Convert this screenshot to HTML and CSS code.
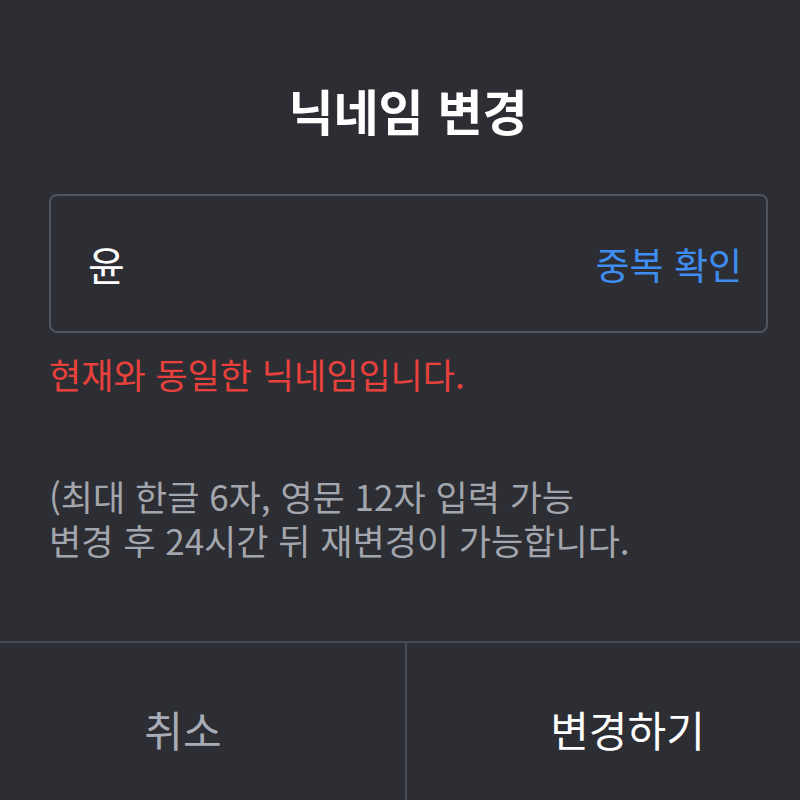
FILE: index.html
```html
<!DOCTYPE html>
<html lang="ko">
  <head>
    <meta charset="UTF-8">
    <meta name="viewport" content="width=device-width, initial-scale=1.0">
    <title>닉네임 변경</title>
    <link rel="stylesheet" href="styles.css">
  </head>
  <body>

    <section class="modal">
      <h1 class="modalTitle">닉네임 변경</h1>

      <div class="modalBody">
        <div class="nicknameBox">
          <span class="nicknameValue">윤</span>
          <button class="checkButton">중복 확인</button>
        </div>

        <p class="errorText">현재와 동일한 닉네임입니다.</p>

        <p class="helpText">(최대 한글 6자, 영문 12자 입력 가능</p>
        <p class="helpText">변경 후 24시간 뒤 재변경이 가능합니다.</p>
      </div>

      <div class="modalButtons">
        <button class="cancelButton">취소</button>
        <button class="submitButton">변경하기</button>
      </div>
    </section>

  </body>
</html>
```

FILE: styles.css
```css
body {
  margin: 0px;
  background-color: rgb(45, 46, 52);
  font-family: "Noto Sans CJK KR", "Noto Sans", sans-serif;
  color: white;
  overflow: hidden;
}

.modal {
  display: flex;
  flex-direction: column;
}

.modalTitle {
  margin: 0px;
  padding-top: 81px;
  padding-left: 16px;
  font-size: 49px;
  line-height: 58px;
  font-weight: 700;
  text-align: center;
}

.modalBody {
  padding: 0px 32px 0px 49px;
}

.nicknameBox {
  margin-top: 55px;
  height: 139px;
  box-sizing: border-box;
  border: 2px solid rgb(80, 84, 92);
  border-radius: 8px;
  display: flex;
  align-items: center;
  justify-content: space-between;
  padding: 0px 24px 0px 37px;
}

.nicknameValue {
  font-size: 40px;
  line-height: 48px;
}

.checkButton {
  background: none;
  border: none;
  padding: 0px;
  font-family: inherit;
  font-size: 37px;
  color: rgb(61, 142, 240);
  cursor: pointer;
}

.errorText {
  margin: 0px;
  margin-top: 20px;
  font-size: 35px;
  line-height: 42px;
  color: rgb(232, 65, 59);
}

.helpText {
  margin: 0px;
  font-size: 35px;
  line-height: 44px;
  color: rgb(163, 166, 173);
}

.errorText + .helpText {
  margin-top: 79px;
}

.modalButtons {
  margin-top: 79px;
  border-top: 2px solid rgb(70, 74, 84);
  display: grid;
  grid-template-columns: 407px 1fr;
}

.modalButtons button {
  height: 170px;
  background: none;
  border: none;
  font-family: inherit;
  font-size: 42px;
  cursor: pointer;
}

.cancelButton {
  border-right: 2px solid rgb(70, 74, 84) !important;
  padding: 0px 39px 0px 0px;
  color: rgb(169, 172, 180);
}

.submitButton {
  padding: 0px 0px 0px 48px;
  color: white;
}
```
